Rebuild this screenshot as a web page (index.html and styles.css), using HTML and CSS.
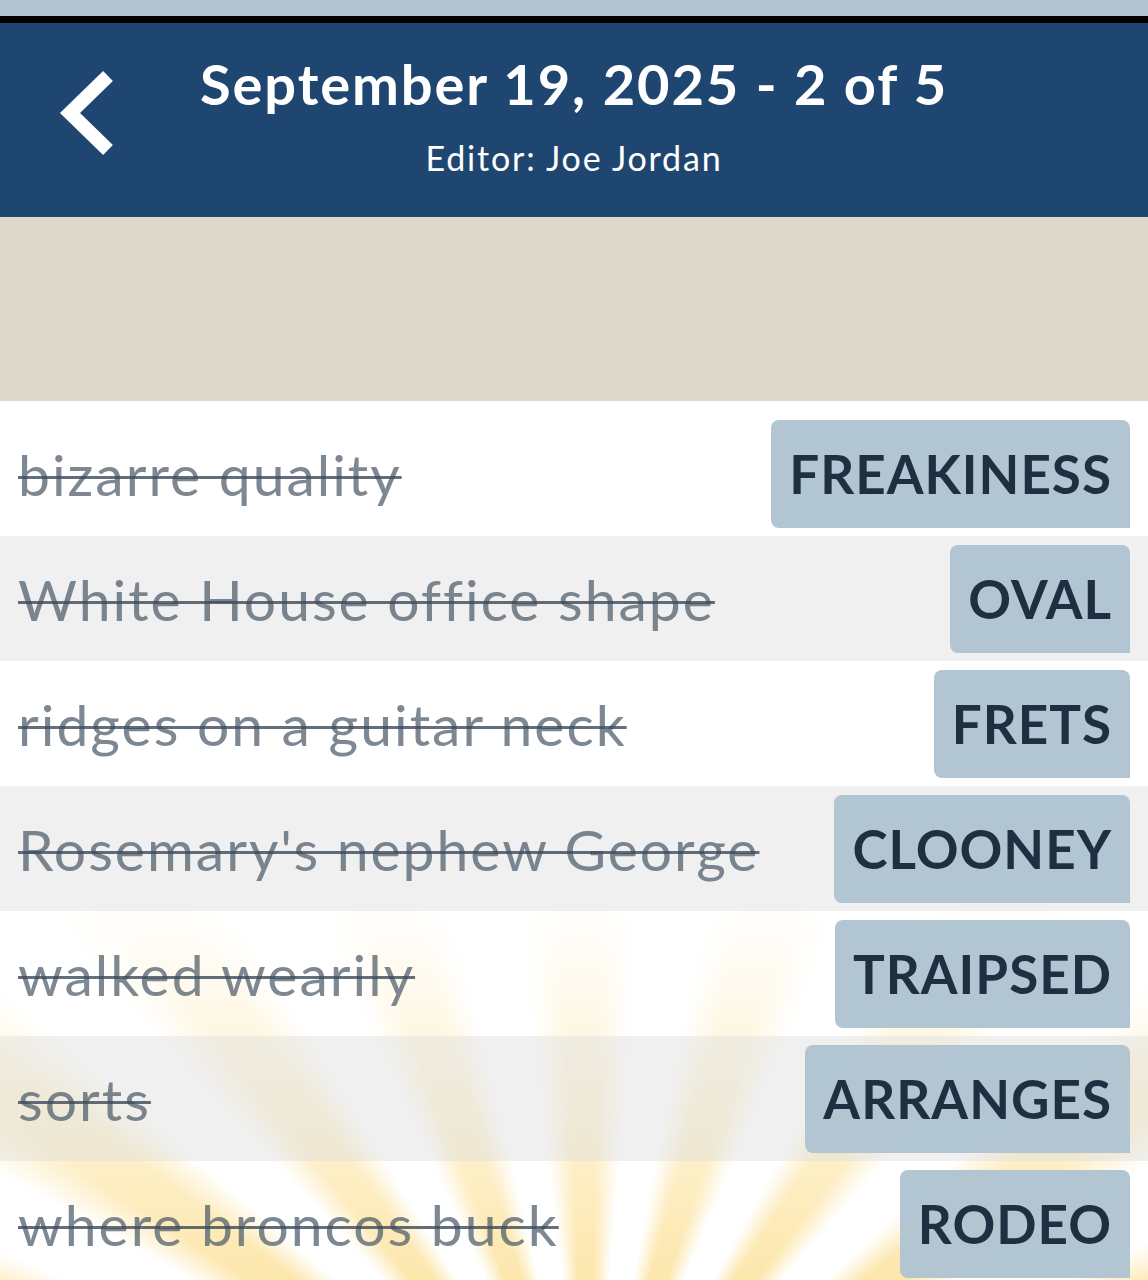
FILE: index.html
```html
<!DOCTYPE html>
<html lang="en">
<head>
<meta charset="utf-8">
<title>September 19, 2025 - 2 of 5</title>
<link rel="stylesheet" href="styles.css">
</head>
<body>
  <div class="status-strip"></div>

  <header class="puzzle-header">
    <a class="back-link" href="#" aria-label="Back">
      <svg class="back-icon" viewBox="56 66 60 90" width="60" height="90" aria-hidden="true">
        <polyline points="108,76 70,113 108,150" fill="none" stroke="#ffffff" stroke-width="14" stroke-linejoin="miter" stroke-linecap="butt"/>
      </svg>
    </a>
    <div class="puzzle-heading">
      <h1 class="puzzle-title">September 19, 2025 - 2 of 5</h1>
      <p class="puzzle-editor">Editor: Joe Jordan</p>
    </div>
    <div class="header-spacer"></div>
  </header>

  <section class="puzzle-banner"></section>

  <ul class="clue-list">
    <li class="clue-row">
      <span class="clue-text">bizarre quality</span>
      <span class="answer-tile">FREAKINESS</span>
    </li>
    <li class="clue-row">
      <span class="clue-text">White House office shape</span>
      <span class="answer-tile">OVAL</span>
    </li>
    <li class="clue-row">
      <span class="clue-text">ridges on a guitar neck</span>
      <span class="answer-tile">FRETS</span>
    </li>
    <li class="clue-row">
      <span class="clue-text">Rosemary's nephew George</span>
      <span class="answer-tile">CLOONEY</span>
    </li>
    <li class="clue-row">
      <span class="clue-text">walked wearily</span>
      <span class="answer-tile">TRAIPSED</span>
    </li>
    <li class="clue-row">
      <span class="clue-text">sorts</span>
      <span class="answer-tile">ARRANGES</span>
    </li>
    <li class="clue-row">
      <span class="clue-text">where broncos buck</span>
      <span class="answer-tile">RODEO</span>
    </li>
  </ul>
</body>
</html>
```

FILE: styles.css
```css
* {
  box-sizing: border-box;
}

html,
body {
  margin: 0;
  padding: 0;
  background: #ffffff;
}

body {
  font-family: Lato, "Noto Sans", "Liberation Sans", sans-serif;
  overflow: hidden;
}

/* thin strip above the app bar */
.status-strip {
  height: 23px;
  background: #b3c2cf;
  border-bottom: 7px solid #000000;
}

/* navy app bar */
.puzzle-header {
  display: grid;
  grid-template-columns: 1fr auto 1fr;
  align-items: start;
  height: 194px;
  padding-top: 28px;
  background: #1f4670;
  color: #ffffff;
}

.back-link {
  display: block;
  justify-self: start;
  margin-left: 56px;
  margin-top: 15px;
  line-height: 0;
}

.back-icon {
  display: block;
}

.puzzle-heading {
  text-align: center;
}

.puzzle-title {
  margin: 0;
  font-size: 56px;
  line-height: 66px;
  font-weight: 700;
  letter-spacing: 1.9px;
}

.puzzle-editor {
  margin: 21px 0 0;
  font-size: 34px;
  line-height: 40px;
  font-weight: 400;
  letter-spacing: 1.8px;
}

/* empty beige panel under the bar */
.puzzle-banner {
  height: 184px;
  background: #dfd8cc;
}

/* clue list with the sunburst glow behind it */
.clue-list {
  list-style: none;
  margin: 0;
  padding: 10px 0 0;
  background:
    linear-gradient(to bottom, #ffffff 0, #ffffff 500px, rgba(255, 255, 255, 0.5) 720px, rgba(255, 255, 255, 0.1) 880px, rgba(255, 255, 255, 0) 900px),
    repeating-conic-gradient(from -3deg at 590px 1100px,
      #fce4a2 0deg, #fce4a2 4deg,
      #ffffff 8deg, #ffffff 14deg,
      #fce4a2 18deg);
}

.clue-row {
  display: flex;
  align-items: center;
  justify-content: space-between;
  height: 125px;
  padding: 0 18px;
}

.clue-row:nth-child(even) {
  background: rgba(222, 222, 222, 0.45);
}

.clue-text {
  font-size: 57px;
  font-weight: 400;
  letter-spacing: 2px;
  color: rgba(70, 85, 100, 0.7);
  text-decoration: line-through;
  text-decoration-color: rgba(60, 74, 90, 0.8);
  text-decoration-thickness: 3px;
  white-space: nowrap;
}

.answer-tile {
  display: flex;
  align-items: center;
  height: 108px;
  padding: 0 18px;
  border-radius: 8px 8px 0 8px;
  background: rgba(176, 195, 209, 0.97);
  color: #1d2f40;
  font-size: 53px;
  font-weight: 700;
  letter-spacing: 1px;
  white-space: nowrap;
}
```
